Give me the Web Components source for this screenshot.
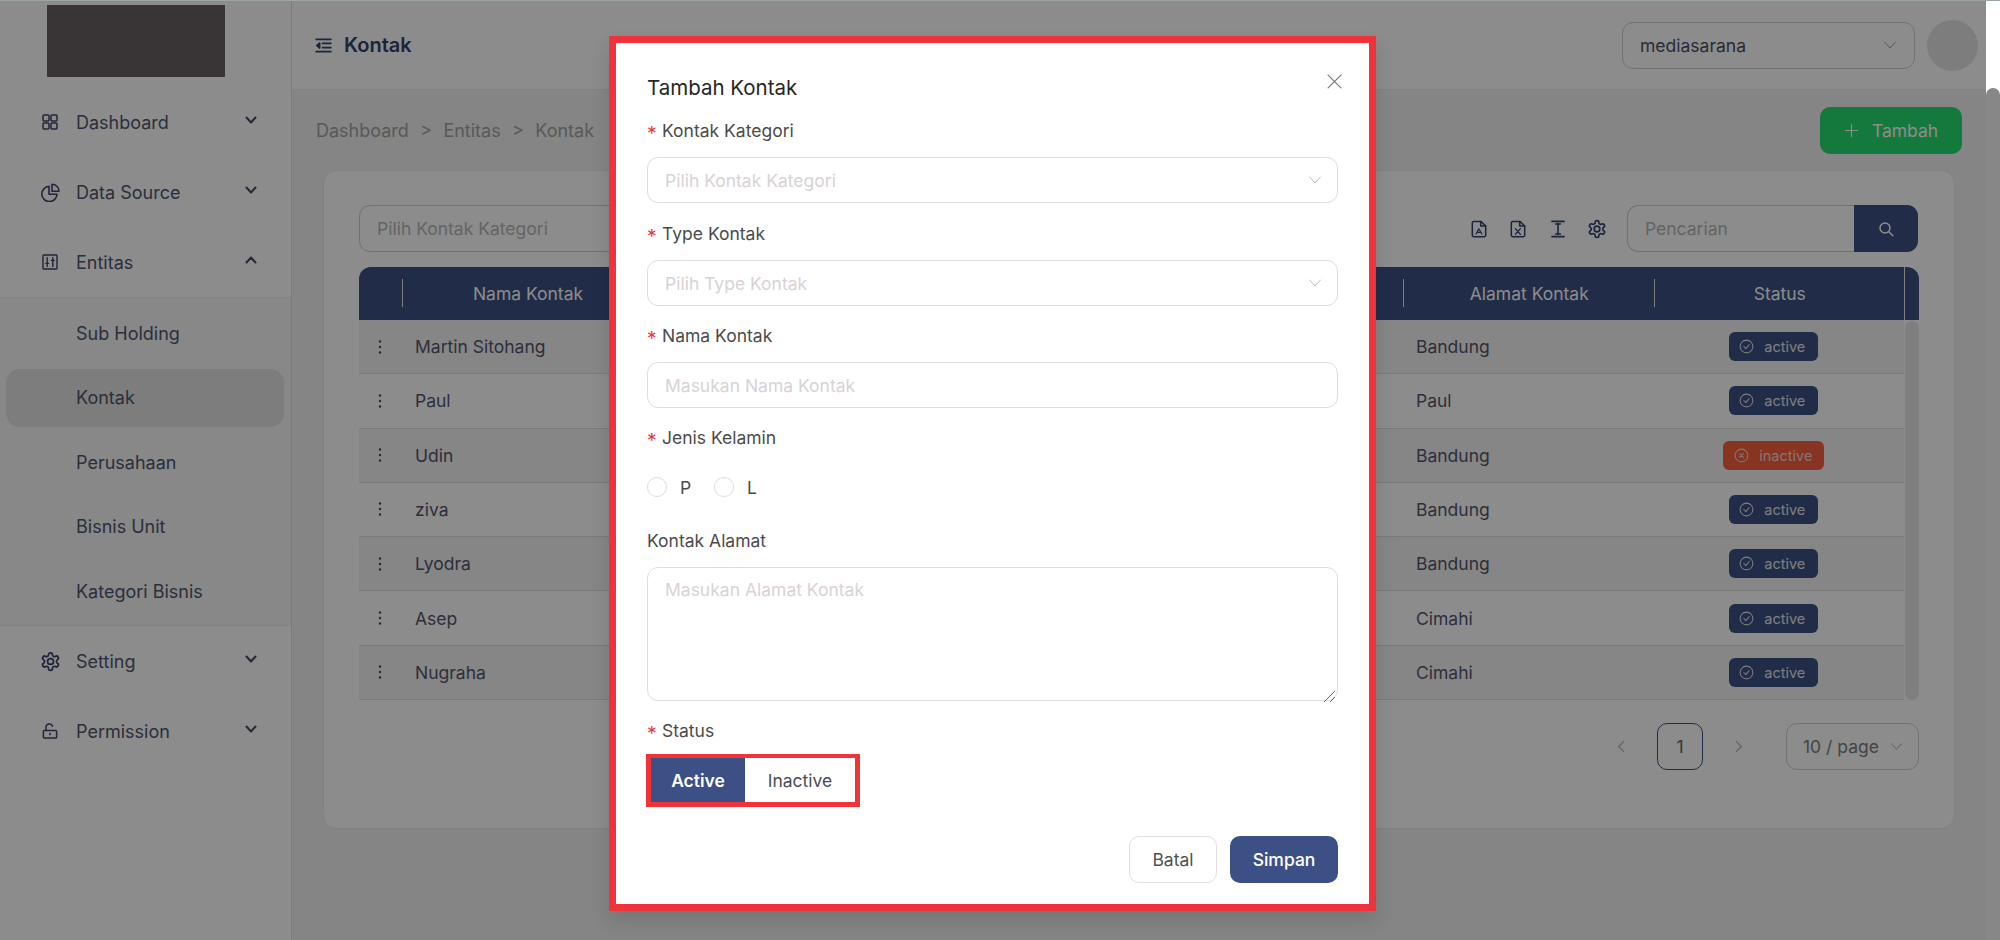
<!DOCTYPE html>
<html lang="id"><head><meta charset="utf-8"><title>Kontak</title>
<style>
html,body{margin:0;padding:0;height:100%;overflow:hidden;background:#fff}
body{font-family:Inter,"Liberation Sans",sans-serif}
</style></head>
<body>
<app-shell>
  <side-bar slot="side">
    <nav-item icon="dash" chev="down">Dashboard</nav-item>
    <nav-item icon="pie" chev="down">Data Source</nav-item>
    <nav-item icon="control" chev="up">Entitas</nav-item>
    <sub-menu>
      <sub-item>Sub Holding</sub-item>
      <sub-item active>Kontak</sub-item>
      <sub-item>Perusahaan</sub-item>
      <sub-item>Bisnis Unit</sub-item>
      <sub-item>Kategori Bisnis</sub-item>
    </sub-menu>
    <nav-item icon="gear" chev="down">Setting</nav-item>
    <nav-item icon="unlock" chev="down">Permission</nav-item>
  </side-bar>
  <top-bar slot="top" heading="Kontak" org="mediasarana"></top-bar>
  <page-content slot="content"></page-content>
  <tambah-modal slot="modal"></tambah-modal>
</app-shell>
<script>
const P='#3d5085';
const svg=(vb,inner,extra='')=>`<svg viewBox="${vb}" width="100%" height="100%" fill="none" stroke="currentColor" stroke-linecap="round" stroke-linejoin="round" ${extra}>${inner}</svg>`;
const GEAR='<path d="M12.22 2h-.44a2 2 0 0 0-2 2v.18a2 2 0 0 1-1 1.73l-.43.25a2 2 0 0 1-2 0l-.15-.08a2 2 0 0 0-2.73.73l-.22.38a2 2 0 0 0 .73 2.73l.15.1a2 2 0 0 1 1 1.72v.51a2 2 0 0 1-1 1.74l-.15.09a2 2 0 0 0-.73 2.73l.22.38a2 2 0 0 0 2.73.73l.15-.08a2 2 0 0 1 2 0l.43.25a2 2 0 0 1 1 1.73V20a2 2 0 0 0 2 2h.44a2 2 0 0 0 2-2v-.18a2 2 0 0 1 1-1.73l.43-.25a2 2 0 0 1 2 0l.15.08a2 2 0 0 0 2.73-.73l.22-.39a2 2 0 0 0-.73-2.73l-.15-.08a2 2 0 0 1-1-1.74v-.5a2 2 0 0 1 1-1.74l.15-.09a2 2 0 0 0 .73-2.73l-.22-.38a2 2 0 0 0-2.73-.73l-.15.08a2 2 0 0 1-2 0l-.43-.25a2 2 0 0 1-1-1.73V4a2 2 0 0 0-2-2z"/><circle cx="12" cy="12" r="3.4"/>';
const ICONS={
 dash:svg('0 0 16 16','<rect x="1" y="1" width="6" height="6" rx="1"/><rect x="9" y="1" width="6" height="6" rx="1"/><rect x="1" y="9" width="6" height="6" rx="1"/><rect x="9" y="9" width="6" height="6" rx="1"/>','stroke-width="1.5"'),
 pie:svg('0 0 19 19','<path d="M8 3.4A7.6 7.6 0 1 0 16 11.2H8z"/><path d="M11 1.2a7 7 0 0 1 7 7h-7z"/>','stroke-width="1.6"'),
 control:svg('0 0 16 16','<rect x="1" y="1" width="14" height="14" rx=".8"/><path d="M5.2 3.6v8.8M10.8 3.6v8.8"/><path d="M3.9 9.4h2.6M9.5 6.4h2.6"/>','stroke-width="1.4"'),
 gear:svg('0 0 24 24',GEAR,'stroke-width="2"'),
 unlock:svg('0 0 16 16','<rect x="1.4" y="7.6" width="13.2" height="7.4" rx=".8"/><path d="M4 7.5V4.4a3.4 3.4 0 0 1 6.6-1.2"/><path d="M8 10.6v1.2"/>','stroke-width="1.5"'),
 fold:svg('0 0 16 16','<path d="M1 2.2h14M7 6h8M7 10h8M1 13.8h14"/><path d="M4.4 5.6 1.6 8l2.8 2.4z" fill="currentColor"/>','stroke-width="1.5"'),
 chevT:svg('0 0 14 14','<path d="M2.5 4.5 7 9.5l4.5-5"/>','stroke-width="2"'),
 chevU:svg('0 0 14 14','<path d="M2.5 9.5 7 4.5l4.5 5"/>','stroke-width="2"'),
 down:svg('0 0 14 14','<path d="M1.5 4 7 10l5.5-6"/>','stroke-width="1"'),
 left:svg('0 0 14 14','<path d="M9.5 1.5 4 7l5.5 5.5"/>','stroke-width="1.2"'),
 right:svg('0 0 14 14','<path d="M4.5 1.5 10 7l-5.5 5.5"/>','stroke-width="1.2"'),
 search:svg('0 0 16 16','<circle cx="7" cy="7" r="5"/><path d="m10.8 10.8 4 4"/>','stroke-width="1.5"'),
 plus:svg('0 0 16 16','<path d="M8 1.5v13M1.5 8h13"/>','stroke-width="1.3"'),
 close:svg('0 0 14 14','<path d="m1 1 12 12M13 1 1 13"/>','stroke-width="1.1"'),
 check:svg('0 0 16 16','<circle cx="8" cy="8" r="6.8"/><path d="m5.2 8 2.1 2.3 3.6-4.4"/>','stroke-width="1.1"'),
 cross:svg('0 0 16 16','<circle cx="8" cy="8" r="6.8"/><path d="m6 6 4 4M10 6l-4 4"/>','stroke-width="1.1"'),
 pdf:svg('0 0 16 18','<path d="M1.3 3a1.6 1.6 0 0 1 1.6-1.6h7L14.7 6v9.2a1.6 1.6 0 0 1-1.6 1.6H2.9a1.6 1.6 0 0 1-1.6-1.6z"/><path d="M9.7 1.4V6h5"/><path d="M5 14l2.8-5.2L11 14M6 12.4h3.6" stroke-width="1.2"/>','stroke-width="1.5"'),
 xls:svg('0 0 16 18','<path d="M1.3 3a1.6 1.6 0 0 1 1.6-1.6h7L14.7 6v9.2a1.6 1.6 0 0 1-1.6 1.6H2.9a1.6 1.6 0 0 1-1.6-1.6z"/><path d="M9.7 1.4V6h5"/><path d="m5.4 8.6 5 5.8M10.4 8.6l-5 5.8" stroke-width="1.3"/>','stroke-width="1.5"'),
 tw:svg('0 0 16 18','<path d="M2 1.4h12M2 16.6h12" stroke-width="1.8"/><path d="M8 3.4v11M5.6 4h4.8M5.6 14h4.8" stroke-width="1.6"/>'),
 dots:svg('0 0 4 16','<circle cx="2" cy="2.5" r="1.2" fill="currentColor" stroke="none"/><circle cx="2" cy="8" r="1.2" fill="currentColor" stroke="none"/><circle cx="2" cy="13.5" r="1.2" fill="currentColor" stroke="none"/>')
};
const def=(name,css,html)=>customElements.define(name,class extends HTMLElement{
  connectedCallback(){ if(this.shadowRoot) return;
    const s=this.attachShadow({mode:'open'});
    s.innerHTML=`<style>${css}</style>`+html(this);
  }});
const FONT='font-family:Inter,"Liberation Sans",sans-serif;';

def('x-icon',':host{display:inline-block;flex:none;line-height:0}',e=>{
  const w=e.getAttribute('w')||16,h=e.getAttribute('h')||w;
  return `<span style="display:block;width:${w}px;height:${h}px">${ICONS[e.getAttribute('name')]}</span>`;
});

def('app-shell',`
 :host{display:flex;width:2000px;height:940px;box-sizing:border-box;border-top:1px solid #9ca69c;background:#fff;${FONT}}
 .stage{position:relative;flex:none;width:1986px;height:939px;display:flex;overflow:hidden}
 .col{flex:1;min-width:0;display:flex;flex-direction:column;background:#f2f2f2}
 .mask{position:absolute;inset:0;background:rgba(0,0,0,.45);display:flex;align-items:flex-start;padding:35px 0 0 609px;box-sizing:border-box}
 .bar{flex:none;width:14px;height:939px;display:flex;flex-direction:column;background:#fff}
 .thumb{margin-top:87px;flex:1;background:#878787;border-radius:7px 7px 0 0}
`,()=>`<div class="stage"><slot name="side"></slot><div class="col"><slot name="top"></slot><slot name="content"></slot></div>
 <div class="mask"><slot name="modal"></slot></div></div><div class="bar"><div class="thumb"></div></div>`);

def('side-bar',`
 :host{display:block;flex:none;width:292px;box-sizing:border-box;border-right:1px solid #e2e2e2;background:#fff;padding-top:4px}
 .logo{width:178px;height:72px;margin:0 0 10px 47px;background:#686062}
`,()=>`<div class="logo"></div><slot></slot>`);

def('nav-item',`
 :host{display:flex;align-items:center;height:70px;padding:0 33px 0 42px;color:#505571;font-size:18px}
 .ib{width:16px;display:flex;justify-content:center}
 .t{margin-left:18px;flex:1}
 .ic{color:#3e4468}
 .c{color:#454a5e;margin-top:-5px}
`,e=>{const n=e.getAttribute('icon'),w=n==='gear'?21:n==='pie'?19:16;
 return `<div class="ib"><x-icon class="ic" name="${n}" w="${w}"></x-icon></div><span class="t"><slot></slot></span><x-icon class="c" name="${e.getAttribute('chev')==='up'?'chevU':'chevT'}" w="14"></x-icon>`});

def('sub-menu',`
 :host{display:flex;flex-direction:column;gap:6.5px;box-sizing:border-box;height:329px;padding:6px 7px 0 6px;background:#f7f7f7;border-top:1px solid #f1f1f1;border-bottom:1px solid #ededed}
`,()=>`<slot></slot>`);
def('sub-item',`
 :host{display:flex;align-items:center;height:58px;padding-left:70px;border-radius:14px;color:#505571;font-size:18px}
 :host([active]){background:#e3e3e3}
`,()=>`<slot></slot>`);

def('top-bar',`
 :host{display:flex;align-items:center;flex:none;box-sizing:border-box;height:89px;padding:0 8px 0 23px;background:#fff;border-bottom:1px solid #f0f0f0}
 .title{margin-left:12px;flex:1;font-size:20px;font-weight:600;color:#33426e}
 x-icon{color:#33426e}
 .sel{display:flex;align-items:center;box-sizing:border-box;width:293px;height:47px;padding:0 17px 0 17px;border:1.5px solid #cfcfcf;border-radius:11px;font-size:17.5px;color:#4e4e62}
 .sel span{flex:1}
 .sel x-icon{color:#a0a0a0}
 .av{width:51px;height:51px;border-radius:50%;margin-left:12px;background:#e4e4e4}
`,e=>`<x-icon name="fold" w="17"></x-icon><div class="title">${e.getAttribute('heading')}</div>
 <div class="sel"><span>${e.getAttribute('org')}</span><x-icon name="down" w="14"></x-icon></div><div class="av"></div>`);

def('page-content',`
 :host{display:block;flex:1;padding:17px 24px 0 31px;background:#f2f2f2}
 .head{display:flex;align-items:center;height:47px;margin-bottom:16px;color:#a2a2a2;font-size:18px}
 .crumb{flex:1;white-space:pre;margin-left:-7px;word-spacing:.6px}
 .add{display:flex;align-items:center;justify-content:center;gap:13px;width:142px;height:47px;box-sizing:border-box;border-radius:10px;background:#26dc6d;color:#fff;font-size:17.5px}
`,()=>`<div class="head"><div class="crumb">Dashboard  &gt;  Entitas  &gt;  Kontak</div>
   <div class="add"><x-icon name="plus" w="15"></x-icon><span>Tambah</span></div></div>
 <kontak-card></kontak-card>`);

def('kontak-card',`
 :host{display:block;box-sizing:border-box;width:1632px;height:659px;padding:34px 35px 0 35px;background:#fff;border:1px solid #ececec;border-radius:14px}
 .tools{display:flex;align-items:center;height:47px;margin-bottom:15px}
 .filter{display:flex;align-items:center;box-sizing:border-box;width:300px;height:47px;padding-left:17px;border:1.5px solid #cfcfcf;border-radius:11px;font-size:17.5px;color:#b6b6b6}
 .sp{flex:1}
 .ico{display:flex;gap:23.5px;color:#33426e;margin-right:22px;align-items:center}
 .search{display:flex;width:291px;height:47px;margin-right:1px}
 .in{flex:1;display:flex;align-items:center;box-sizing:border-box;padding-left:17px;border:1.5px solid #cfcfcf;border-right:0;border-radius:11px 0 0 11px;font-size:17.5px;color:#b6b6b6}
 .btn{width:64px;display:flex;align-items:center;justify-content:center;background:${P};color:#fff;border-radius:0 11px 11px 0}
`,()=>`<div class="tools"><div class="filter">Pilih Kontak Kategori</div><div class="sp"></div>
   <div class="ico"><x-icon name="pdf" w="16" h="18"></x-icon><x-icon name="xls" w="16" h="18"></x-icon><x-icon name="tw" w="16" h="18"></x-icon><x-icon name="gear" w="20" h="20" style="margin:0 -2px"></x-icon></div>
   <div class="search"><div class="in">Pencarian</div><div class="btn"><x-icon name="search" w="16"></x-icon></div></div></div>
 <kontak-table></kontak-table>
 <pager-bar></pager-bar>`);

const ROWS=[['Martin Sitohang','Bandung',1],['Paul','Paul',1],['Udin','Bandung',0],['ziva','Bandung',1],['Lyodra','Bandung',1],['Asep','Cimahi',1],['Nugraha','Cimahi',1]];
const COLS='grid-template-columns:43px 252px 749px 250.5px 250.5px';
def('kontak-table',`
 :host{display:grid;grid-template-columns:1545px 15px;grid-template-rows:53px 380px;width:1560px}
 .hd{display:grid;${COLS};align-items:center;background:${P};color:#fff;font-size:17.5px;border-radius:12px 0 0 0;text-align:center}
 .cell{position:relative;height:100%;display:flex;align-items:center;justify-content:center}
 .cell.s::before{content:"";position:absolute;left:0;top:12px;bottom:13px;width:1px;background:#e8e8e8}
 .cell.r{padding-left:2px;box-sizing:border-box}
 .end{background:${P};border-left:1px solid #e8e8e8;border-radius:0 12px 0 0;box-sizing:border-box}
 .body{display:grid;grid-auto-rows:1fr}
 .track{padding:1px 0 0 1px}
 .thumb{height:100%;background:#e8e8e8;border-radius:8px}
 kontak-row:nth-child(odd){background:#f4f4f4}
`,()=>`<div class="hd"><div class="cell"></div><div class="cell s"><span>Nama Kontak</span></div><div class="cell s"></div><div class="cell s r"><span>Alamat Kontak</span></div><div class="cell s r"><span>Status</span></div></div><div class="end"></div>
 <div class="body">${ROWS.map(r=>`<kontak-row nama="${r[0]}" alamat="${r[1]}" ${r[2]?'':'off'}></kontak-row>`).join('')}</div><div class="track"><div class="thumb"></div></div>`);

def('kontak-row',`
 :host{display:grid;${COLS};align-items:center;border-bottom:1px solid #dfdfdf;box-sizing:border-box;font-size:17.5px;color:#55556f}
 .d{display:flex;justify-content:center;color:#4a4a5e;padding-right:2px}
 .n{padding-left:13px}
 .st{display:flex;justify-content:center;padding-right:10px}
`,e=>`<div class="d"><x-icon name="dots" w="4" h="16"></x-icon></div><div class="n">${e.getAttribute('nama')}</div><div></div><div class="n">${e.getAttribute('alamat')}</div>
 <div class="st"><status-badge ${e.hasAttribute('off')?'off':''}></status-badge></div>`);

def('status-badge',`
 :host{display:inline-flex;align-items:center;gap:10px;box-sizing:border-box;height:29px;width:89px;padding-left:10px;border-radius:6px;background:${P};color:#e6e6e6;font-size:14.5px}
 :host([off]){background:#f75f40;width:101px;color:#f2d8d0;padding-left:11px}
`,e=>`<x-icon name="${e.hasAttribute('off')?'cross':'check'}" w="15"></x-icon><span>${e.hasAttribute('off')?'inactive':'active'}</span>`);

def('pager-bar',`
 :host{display:flex;justify-content:flex-end;align-items:center;height:47px;margin-top:23px;width:1560px;font-size:17.5px;color:#7f7f7f}
 .pg{color:#b0b0b0}
 .cur{box-sizing:border-box;width:46px;height:47px;display:flex;align-items:center;justify-content:center;border:1.5px solid ${P};border-radius:10px;margin:0 29px;color:#666}
 .sz{box-sizing:border-box;width:133px;height:47px;margin-left:41px;display:flex;align-items:center;gap:11px;padding-left:16px;border:1.5px solid #cfcfcf;border-radius:11px;color:#7c7c7c}
 .sz x-icon{color:#a8a8a8}
`,()=>`<x-icon class="pg" name="left" w="13"></x-icon><div class="cur">1</div><x-icon class="pg" name="right" w="13"></x-icon>
 <div class="sz"><span>10 / page</span><x-icon name="down" w="13"></x-icon></div>`);

def('form-label',`
 :host{display:flex;align-items:center;height:24px;font-size:17.5px;color:#4b4b4b;margin-bottom:15px}
 .s{color:#f0333b;width:15px;font-size:19px;margin-top:6px;flex:none}
`,e=>`${e.hasAttribute('req')?'<span class="s">*</span>':''}<slot></slot>`);

def('text-box',`
 :host{display:flex;align-items:center;box-sizing:border-box;height:46px;margin-bottom:17px;padding:0 15px 0 17px;border:1.5px solid #dedede;border-radius:11px;font-size:17.5px;color:#d8d2d6;position:relative}
 :host([first]){margin-bottom:18px}
 :host([area]){height:134px;align-items:flex-start;padding-top:11px;margin-bottom:17px}
 span{flex:1}
 .ch{color:#bdbdbd}
 .gr{position:absolute;right:1px;bottom:1px;width:13px;height:13px;color:#666}
`,e=>`<span><slot></slot></span>${e.hasAttribute('select')?'<x-icon class="ch" name="down" w="14"></x-icon>':''}${e.hasAttribute('area')?'<div class="gr"><svg viewBox="0 0 13 13" width="13" height="13" stroke="currentColor" stroke-width="1"><path d="M1 12 12 1M7 12l5-5"/></svg></div>':''}`);

def('radio-row',`
 :host{display:flex;align-items:center;height:46px;margin-bottom:18px;font-size:17.5px;color:#4b4b4b}
 i{display:block;flex:none;width:20px;height:20px;box-sizing:border-box;border:1.5px solid #dcdcdc;border-radius:50%;margin-right:13px}
 span{width:34px}
`,()=>`<i></i><span>P</span><i></i><span>L</span>`);

def('status-seg',`
 :host{display:flex;box-sizing:border-box;width:214px;height:53px;margin-left:-1px;border:solid #f0333b;border-width:4px 5px 5px;font-size:17.5px}
 div{display:flex;align-items:center;justify-content:center;color:#4b4b55;background:#fff}
 .on{width:94px;background:${P};color:#fff;font-weight:600}
 .of{flex:1}
`,()=>`<div class="on">Active</div><div class="of">Inactive</div>`);

def('tambah-modal',`
 :host{display:block;box-sizing:border-box;width:767px;height:875px;border:7px solid #f0333b;background:#fff;padding:31px 31px 0;position:relative;box-shadow:0 10px 18px rgba(0,0,0,.12);${FONT}}
 .title{font-size:20.5px;line-height:28px;font-weight:400;color:#262626;margin-bottom:16px}
 .x{position:absolute;right:27px;top:30px;color:#777}
 .foot{display:flex;justify-content:flex-end;gap:13px;margin-top:29px}
 .b{display:flex;align-items:center;justify-content:center;box-sizing:border-box;height:47px;border-radius:10px;font-size:17.5px}
 .c{width:88px;border:1.5px solid #e0e0e0;color:#505050}
 .p{width:108px;background:${P};color:#fff;font-weight:500}
 form-label.st{margin-bottom:12px}
`,()=>`<div class="title">Tambah Kontak</div><div class="x"><x-icon name="close" w="15"></x-icon></div>
 <form-label req>Kontak Kategori</form-label><text-box select first>Pilih Kontak Kategori</text-box>
 <form-label req>Type Kontak</form-label><text-box select>Pilih Type Kontak</text-box>
 <form-label req>Nama Kontak</form-label><text-box>Masukan Nama Kontak</text-box>
 <form-label req>Jenis Kelamin</form-label><radio-row></radio-row>
 <form-label>Kontak Alamat</form-label><text-box area>Masukan Alamat Kontak</text-box>
 <form-label class="st" req>Status</form-label><status-seg></status-seg>
 <div class="foot"><div class="b c">Batal</div><div class="b p">Simpan</div></div>`);
</script>
</body></html>
